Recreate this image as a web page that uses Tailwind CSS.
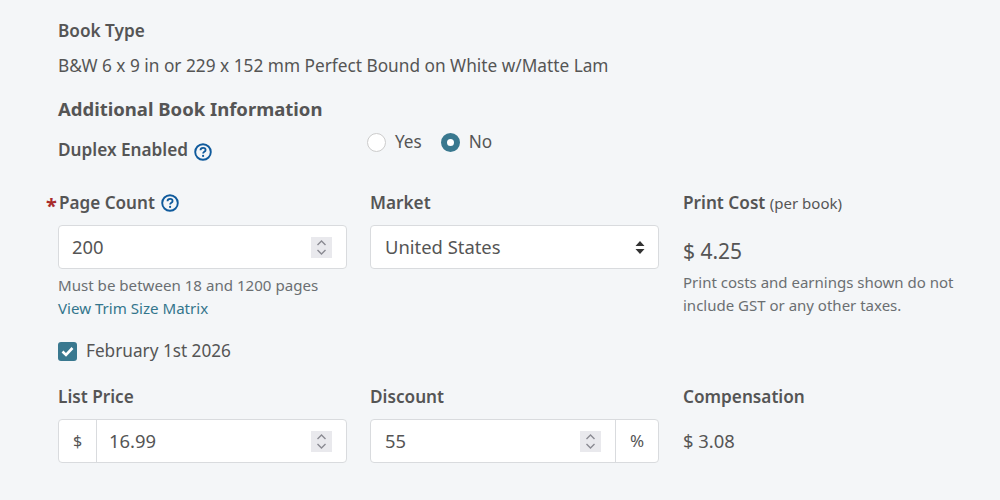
<!DOCTYPE html>
<html lang="en">
<head>
<meta charset="UTF-8" />
<title>Book Setup</title>
<script src="https://cdn.jsdelivr.net/npm/@tailwindcss/browser@4"></script>
</head>
<body class="bg-[#f4f6f8] font-['Noto_Sans',sans-serif] text-[#555] w-[1000px] h-[500px] overflow-hidden">
<div class="pl-[58px] pr-[23px] pt-[19px]">
  <!-- book type -->
  <div class="text-[17.2px] font-semibold leading-6">Book Type</div>
  <div class="text-[17.26px] leading-6 mt-[11px]">B&amp;W 6 x 9 in or 229 x 152 mm Perfect Bound on White w/Matte Lam</div>
  <div class="text-[18.5px] font-bold leading-6 mt-[19px]">Additional Book Information</div>

  <!-- duplex -->
  <div class="grid grid-cols-[289px_289px_1fr] gap-x-[23px] mt-[17px] h-[53px]">
    <div class="flex items-center gap-[6px] h-6 text-[17.2px] font-semibold">
      Duplex Enabled
      <svg class="w-[18px] h-[18px] mt-[3px]" viewBox="0 0 18 18" fill="none"><circle cx="9" cy="9" r="7.8" stroke="#0f5a9c" stroke-width="1.9"/><path d="M6.5 7.2c0-1.5 1.1-2.4 2.6-2.4s2.5.9 2.5 2.1c0 1.9-2.5 1.9-2.5 3.6" stroke="#0f5a9c" stroke-width="1.8"/><circle cx="9.1" cy="12.9" r="1.1" fill="#0f5a9c"/></svg>
    </div>
    <div class="flex items-center h-6 -mt-[8px] text-[17.2px] col-span-2">
      <span class="w-[19px] h-[19px] rounded-full bg-white border border-[#ccc] ml-[-3px]"></span>
      <span class="ml-[9px]">Yes</span>
      <span class="w-[19px] h-[19px] rounded-full border-[6px] border-[#39788f] bg-white ml-[19px]"></span>
      <span class="ml-[9px]">No</span>
    </div>
  </div>

  <!-- page count row -->
  <div class="grid grid-cols-[289px_289px_1fr] gap-x-[23px]">
    <div>
      <div class="relative flex items-center gap-[6px] h-6 text-[17.1px] font-semibold">
        <span class="absolute left-[-12px] top-[3px] text-[#a92b2b] text-[20px] font-bold leading-6">*</span>
        <span class="ml-px">Page Count</span>
        <svg class="w-[18px] h-[18px]" viewBox="0 0 18 18" fill="none"><circle cx="9" cy="9" r="7.8" stroke="#0f5a9c" stroke-width="1.9"/><path d="M6.5 7.2c0-1.5 1.1-2.4 2.6-2.4s2.5.9 2.5 2.1c0 1.9-2.5 1.9-2.5 3.6" stroke="#0f5a9c" stroke-width="1.8"/><circle cx="9.1" cy="12.9" r="1.1" fill="#0f5a9c"/></svg>
      </div>
      <div class="mt-[10px] h-[44px] bg-white border border-[#d9dbde] rounded flex items-center pl-[13px] pr-[14px] text-[18.4px]">
        <span class="flex-1">200</span>
        <span class="w-[21px] h-[21px] bg-[#e9e9ed] flex items-center justify-center">
          <svg class="w-[13px] h-[17px]" viewBox="0 0 13 17" fill="none" stroke="#8a8a92" stroke-width="1.4"><path d="M2.5 6 6.5 2l4 4M2.5 11l4 4 4-4"/></svg>
        </span>
      </div>
      <div class="text-[15.1px] leading-[23px] mt-[5px] text-[#6b6f72]">Must be between 18 and 1200 pages</div>
      <a class="block text-[15.1px] leading-[23px] text-[#33758c]">View Trim Size Matrix</a>
    </div>
    <div>
      <div class="h-6 text-[17.2px] font-semibold leading-6">Market</div>
      <div class="mt-[10px] h-[44px] bg-white border border-[#d9dbde] rounded flex items-center justify-between pl-[14px] pr-[13px] text-[18.4px]">
        United States
        <svg class="w-[10px] h-[13px]" viewBox="0 0 10 13" fill="#333"><path d="M5 0l4.5 5H.5zM5 13 .5 8h9z"/></svg>
      </div>
    </div>
    <div class="pl-px">
      <div class="h-6 leading-6 text-[17.2px] font-semibold">Print Cost <span class="text-[15px] font-normal">(per book)</span></div>
      <div class="text-[21px] leading-6 mt-[24px]">$ 4.25</div>
      <div class="text-[15px] leading-[23px] mt-[8px] text-[#6b6f72]">Print costs and earnings shown do not<br />include GST or any other taxes.</div>
    </div>
  </div>

  <!-- date checkbox -->
  <div class="flex items-center gap-[9px] h-6 mt-[19px] text-[17.2px]">
    <span class="w-[19px] h-[19px] rounded-[3px] bg-[#39788f] flex items-center justify-center">
      <svg class="w-[13px] h-[11px]" viewBox="0 0 13 11" fill="none" stroke="#fff" stroke-width="2.6"><path d="M1.5 5.5 5 9l6.5-7"/></svg>
    </span>
    February 1st 2026
  </div>

  <!-- price row -->
  <div class="grid grid-cols-[289px_289px_1fr] gap-x-[23px] mt-[22px]">
    <div>
      <div class="h-6 leading-6 text-[17.2px] font-semibold">List Price</div>
      <div class="mt-[10px] h-[44px] bg-white border border-[#d9dbde] rounded flex items-center text-[18.4px]">
        <span class="w-[38px] h-full border-r border-[#d9dbde] flex items-center justify-center text-base">$</span>
        <span class="flex-1 pl-[12px]">16.99</span>
        <span class="w-[21px] h-[21px] bg-[#e9e9ed] flex items-center justify-center mr-[14px]">
          <svg class="w-[13px] h-[17px]" viewBox="0 0 13 17" fill="none" stroke="#8a8a92" stroke-width="1.4"><path d="M2.5 6 6.5 2l4 4M2.5 11l4 4 4-4"/></svg>
        </span>
      </div>
    </div>
    <div>
      <div class="h-6 leading-6 text-[17.2px] font-semibold">Discount</div>
      <div class="mt-[10px] h-[44px] bg-white border border-[#d9dbde] rounded flex items-center text-[18.4px]">
        <span class="flex-1 pl-[14px]">55</span>
        <span class="w-[21px] h-[21px] bg-[#e9e9ed] flex items-center justify-center mr-[14px]">
          <svg class="w-[13px] h-[17px]" viewBox="0 0 13 17" fill="none" stroke="#8a8a92" stroke-width="1.4"><path d="M2.5 6 6.5 2l4 4M2.5 11l4 4 4-4"/></svg>
        </span>
        <span class="w-[43px] h-full border-l border-[#d9dbde] flex items-center justify-center text-[17px]">%</span>
      </div>
    </div>
    <div class="pl-px">
      <div class="h-6 leading-6 text-[17.2px] font-semibold">Compensation</div>
      <div class="text-[18.4px] leading-6 mt-[20px]">$ 3.08</div>
    </div>
  </div>
</div>
</body>
</html>
